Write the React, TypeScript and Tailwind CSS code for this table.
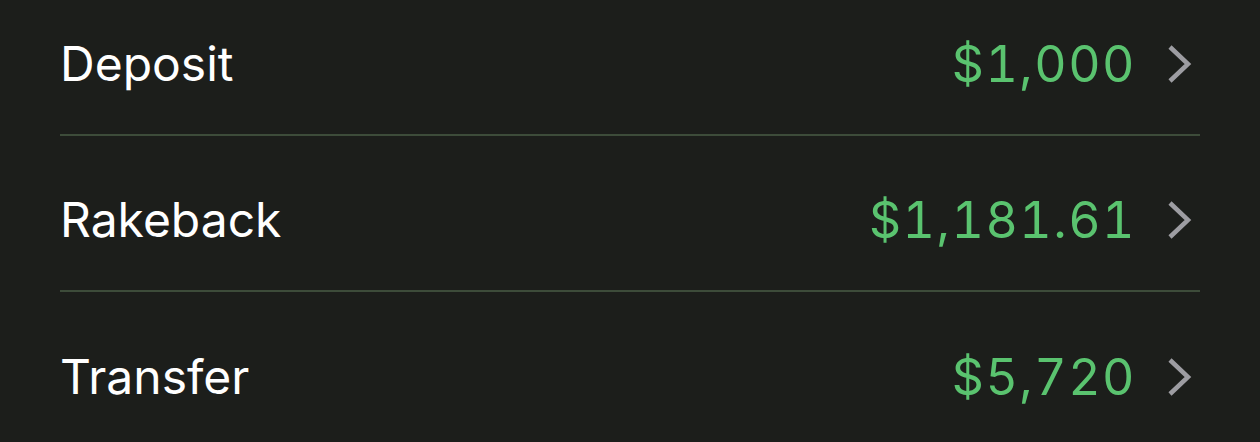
const rows = [
  { label: 'Deposit', amount: '$1,000' },
  { label: 'Rakeback', amount: '$1,181.61' },
  { label: 'Transfer', amount: '$5,720' },
];

function Chevron() {
  return (
    <svg width="28" height="40" viewBox="0 0 28 40" fill="none" className="shrink-0">
      <polyline
        points="4,3 22,20 4,37"
        stroke="#9d9da2"
        strokeWidth={4.5}
        strokeLinecap="butt"
        strokeLinejoin="miter"
      />
    </svg>
  );
}

export default function App() {
  return (
    <div
      className="h-[442px] w-[1260px] overflow-hidden bg-[#1c1e1b] px-[60px]"
      style={{ fontFamily: 'Inter, "Noto Sans", sans-serif' }}
    >
      <div className="-mt-[20px]">
        {rows.map((r, i) => (
          <div
            key={r.label}
            className={`flex h-[156px] items-center pt-[60px] pb-[46px] ${i < rows.length - 1 ? 'border-b-2 border-[#3d4c3a]' : ''}`}
          >
            <span className="flex-1 text-[48px] leading-[48px] text-white">{r.label}</span>
            <span className="text-[50px] leading-[48px] tracking-[1.5px] tabular-nums text-[#5ac36f]">{r.amount}</span>
            <span className="ml-[30px] mr-[6px] flex items-center">
              <Chevron />
            </span>
          </div>
        ))}
      </div>
    </div>
  );
}
